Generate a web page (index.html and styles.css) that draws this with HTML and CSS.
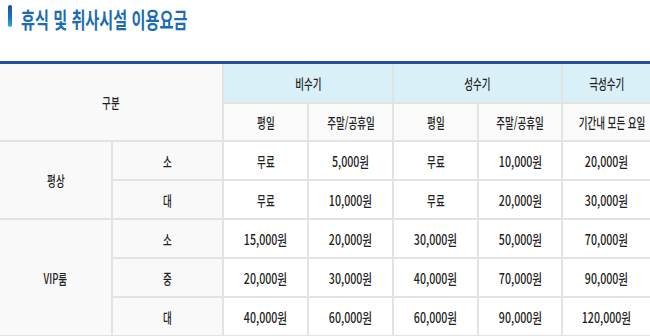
FILE: index.html
```html
<!DOCTYPE html>
<html lang="ko">
<head>
<meta charset="utf-8">
<title>휴식 및 취사시설 이용요금</title>
<link rel="stylesheet" href="styles.css">
</head>
<body>
<h2 class="title"><span class="bar"></span><span class="title-text">휴식 및 취사시설 이용요금</span></h2>
<table class="fee">
  <colgroup>
    <col class="c1"><col class="c2"><col class="c3"><col class="c4"><col class="c5"><col class="c6"><col class="c7">
  </colgroup>
  <thead>
    <tr class="h1">
      <th colspan="2" rowspan="2" class="gray"><span class="t">구분</span></th>
      <th colspan="2" class="blue"><span class="t">비수기</span></th>
      <th colspan="2" class="blue"><span class="t">성수기</span></th>
      <th class="blue last"><span class="t">극성수기</span></th>
    </tr>
    <tr class="h2">
      <th class="sub"><span class="t">평일</span></th>
      <th class="sub"><span class="t">주말/공휴일</span></th>
      <th class="sub"><span class="t">평일</span></th>
      <th class="sub"><span class="t">주말/공휴일</span></th>
      <th class="sub last"><span class="t">기간내 모든 요일</span></th>
    </tr>
  </thead>
  <tbody>
    <tr>
      <th rowspan="2" class="gray"><span class="t">평상</span></th>
      <th class="gray"><span class="t">소</span></th>
      <td><span class="t">무료</span></td>
      <td><span class="t n">5,000원</span></td>
      <td><span class="t">무료</span></td>
      <td><span class="t n">10,000원</span></td>
      <td class="last"><span class="t n">20,000원</span></td>
    </tr>
    <tr>
      <th class="gray"><span class="t">대</span></th>
      <td><span class="t">무료</span></td>
      <td><span class="t n">10,000원</span></td>
      <td><span class="t">무료</span></td>
      <td><span class="t n">20,000원</span></td>
      <td class="last"><span class="t n">30,000원</span></td>
    </tr>
    <tr>
      <th rowspan="3" class="gray"><span class="t">VIP룸</span></th>
      <th class="gray"><span class="t">소</span></th>
      <td><span class="t n">15,000원</span></td>
      <td><span class="t n">20,000원</span></td>
      <td><span class="t n">30,000원</span></td>
      <td><span class="t n">50,000원</span></td>
      <td class="last"><span class="t n">70,000원</span></td>
    </tr>
    <tr>
      <th class="gray"><span class="t">중</span></th>
      <td><span class="t n">20,000원</span></td>
      <td><span class="t n">30,000원</span></td>
      <td><span class="t n">40,000원</span></td>
      <td><span class="t n">70,000원</span></td>
      <td class="last"><span class="t n">90,000원</span></td>
    </tr>
    <tr>
      <th class="gray"><span class="t">대</span></th>
      <td><span class="t n">40,000원</span></td>
      <td><span class="t n">60,000원</span></td>
      <td><span class="t n">60,000원</span></td>
      <td><span class="t n">90,000원</span></td>
      <td class="last"><span class="t n">120,000원</span></td>
    </tr>
  </tbody>
</table>
</body>
</html>
```
FILE: styles.css
```css
* { box-sizing: border-box; }
html, body {
  margin: 0;
  padding: 0;
  background: #fff;
}
body {
  width: 650px;
  height: 336px;
  overflow: hidden;
  font-family: "Noto Sans CJK KR", "Noto Sans", sans-serif;
  color: #333;
}
.title {
  margin: 0;
  height: 61px;
  padding: 5px 0 0 8px;
  display: flex;
  align-items: flex-start;
  font-size: 22px;
  font-weight: 700;
  line-height: 22px;
  color: #1b6cb3;
}
.bar {
  flex: none;
  width: 4px;
  height: 22px;
  border-radius: 2px;
  background: linear-gradient(to bottom, #1f4fa6 0%, #1f6fc0 55%, #2ab3cc 100%);
}
.title-text {
  display: inline-block;
  margin-left: 9px;
  margin-top: 2px;
  white-space: nowrap;
  transform: scaleX(0.69);
  transform-origin: left center;
  letter-spacing: 0;
}
.fee {
  width: 650px;
  table-layout: fixed;
  border-collapse: separate;
  border-spacing: 0;
  border-top: 3px solid #26509f;
  font-size: 14px;
  line-height: 16px;
}
.c1 { width: 113px; }
.c2 { width: 111px; }
.c3 { width: 85px; }
.c4 { width: 85px; }
.c5 { width: 85px; }
.c6 { width: 84px; }
.fee th, .fee td {
  padding: 0;
  height: 39px;
  text-align: center;
  vertical-align: middle;
  font-weight: 500;
  color: #222;
  border-right: 2px solid #e3e3e3;
  border-bottom: 2px solid #e3e3e3;
  white-space: nowrap;
  background: #fff;
}
.fee .h1 th { height: 40px; }
.fee .h2 th { height: 38px; }
.fee .last { border-right: 0; }
.fee .gray { background: #f9f9f9; }
.fee .blue { background: #daf0f8; }
.fee .sub { background: #fafafa; }
.t {
  display: inline-block;
  transform: scaleX(0.68);
  transform-origin: center;
}
.t.n { transform: scaleX(0.76); }
```
